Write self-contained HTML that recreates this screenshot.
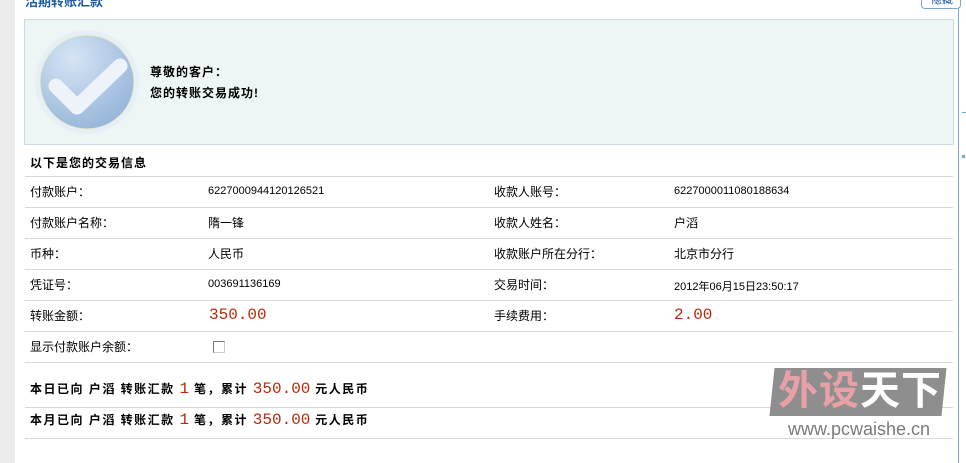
<!DOCTYPE html>
<html><head><meta charset="utf-8"><style>
*{margin:0;padding:0;box-sizing:border-box}
body{width:966px;height:463px;overflow:hidden;background:#fff;font-family:"Liberation Sans","Noto Sans CJK SC","WenQuanYi Zen Hei",sans-serif;font-size:12px;color:#000;position:relative}
.ab{position:absolute}
.line{position:absolute;left:25px;width:928px;height:1px;background:#d8d8d8}
.red{color:#b52a0a;font-family:"Liberation Mono",monospace;font-size:16px}
.b{font-weight:bold}
.ls{letter-spacing:1.5px}
</style></head><body>
<div class="ab" style="left:0;top:0;width:15px;height:463px;background:#ececec"></div>
<div class="ab b" style="left:25px;top:-9px;color:#1b5aa0;font-size:13px">活期转账汇款</div>
<div class="ab" style="left:921px;top:-8px;width:40px;height:17px;border:1px solid #7aa6d6;border-radius:4px;background:#fff;color:#1b5aa0;font-size:11px;padding-left:9px;line-height:14px">隐藏</div>
<div class="ab" style="left:958px;top:9px;width:1px;height:454px;background:#7aa6d6"></div>
<div class="ab" style="left:962px;top:112px;width:4px;height:1px;background:#7aa6d6"></div>
<div class="ab" style="left:962px;top:155px;width:3px;height:3px;background:#7aa6d6"></div>
<div class="ab" style="left:24px;top:19px;width:930px;height:126px;background:#eef6f5;border:1px solid #c9dbe9"></div>
<svg class="ab" style="left:34px;top:29px" width="106" height="106" viewBox="0 0 106 106">
<defs><radialGradient id="g" cx="35%" cy="25%" r="80%"><stop offset="0" stop-color="#d6e4f4"/><stop offset="1" stop-color="#95b5d9"/></radialGradient></defs>
<circle cx="53" cy="53" r="52" fill="#e6eef7"/>
<circle cx="53" cy="53" r="47" fill="url(#g)" stroke="#e8eec8" stroke-width="1"/>
<path d="M22 57 L43 78 L86 37" fill="none" stroke="#eef3fa" stroke-width="15" stroke-linejoin="round" stroke-linecap="round"/>
</svg>
<div class="ab b" style="left:150px;top:63px;letter-spacing:1px">尊敬的客户：</div>
<div class="ab b" style="left:150px;top:84px;letter-spacing:1px">您的转账交易成功!</div>
<div class="ab b" style="left:30px;top:154px;letter-spacing:1px">以下是您的交易信息</div>
<div class="line" style="top:176px"></div>
<div class="line" style="top:207px"></div>
<div class="line" style="top:238px"></div>
<div class="line" style="top:269px"></div>
<div class="line" style="top:300px"></div>
<div class="line" style="top:331px"></div>
<div class="line" style="top:362px"></div>
<div class="line" style="top:407px"></div>
<div class="line" style="top:438px"></div>
<div class="ab" style="left:30px;top:183px">付款账户：</div>
<div class="ab" style="left:208px;top:185px;font-size:11px">6227000944120126521</div>
<div class="ab" style="left:494px;top:183px">收款人账号：</div>
<div class="ab" style="left:674px;top:185px;font-size:11px">6227000011080188634</div>
<div class="ab" style="left:30px;top:214px">付款账户名称：</div>
<div class="ab" style="left:208px;top:214px">隋一锋</div>
<div class="ab" style="left:494px;top:214px">收款人姓名：</div>
<div class="ab" style="left:674px;top:214px">户滔</div>
<div class="ab" style="left:30px;top:245px">币种：</div>
<div class="ab" style="left:208px;top:245px">人民币</div>
<div class="ab" style="left:494px;top:245px">收款账户所在分行：</div>
<div class="ab" style="left:674px;top:245px">北京市分行</div>
<div class="ab" style="left:30px;top:276px">凭证号：</div>
<div class="ab" style="left:208px;top:278px;font-size:11px">003691136169</div>
<div class="ab" style="left:494px;top:276px">交易时间：</div>
<div class="ab" style="left:674px;top:278px;font-size:11px">2012年06月15日23:50:17</div>
<div class="ab" style="left:30px;top:307px">转账金额：</div>
<div class="ab red" style="left:209px;top:306px">350.00</div>
<div class="ab" style="left:494px;top:307px">手续费用：</div>
<div class="ab red" style="left:674px;top:306px">2.00</div>
<div class="ab" style="left:30px;top:338px">显示付款账户余额：</div>
<div class="ab" style="left:213px;top:341px;width:12px;height:12px;border:1px solid #777;border-right-color:#ccc;border-bottom-color:#ccc"></div>
<div class="ab b ls" style="left:30px;top:380px;line-height:18px">本日已向 户滔 转账汇款 <span class="red" style="font-weight:normal;letter-spacing:0">1</span> 笔，累计 <span class="red" style="font-weight:normal;letter-spacing:0">350.00</span> 元人民币</div>
<div class="ab b ls" style="left:30px;top:411px;line-height:18px">本月已向 户滔 转账汇款 <span class="red" style="font-weight:normal;letter-spacing:0">1</span> 笔，累计 <span class="red" style="font-weight:normal;letter-spacing:0">350.00</span> 元人民币</div>
<div class="ab" style="left:772px;top:368px;width:172px;height:48px;background:#8e8e8e;transform:skewX(-6deg)"></div>
<div class="ab b" style="left:778px;top:368px;font-size:40px;line-height:46px;letter-spacing:1px"><span style="color:#e7a0a6">外设</span><span style="color:#fff">天下</span></div>
<div class="ab" style="left:788px;top:419px;font-size:18px;color:#7a7a7a">www.pcwaishe.cn</div>
</body></html>
